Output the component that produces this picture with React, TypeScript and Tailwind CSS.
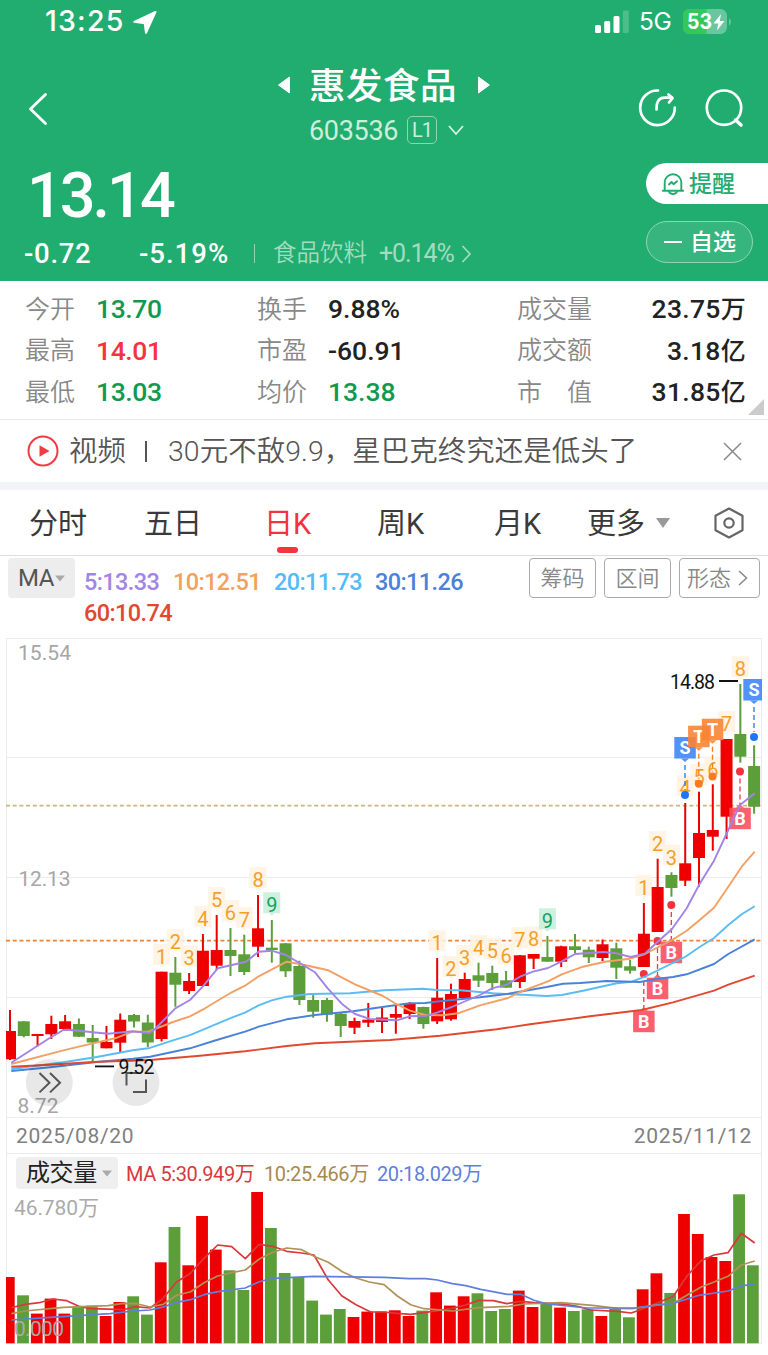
import React from 'react';

type Tone = 'r' | 'g';
// tone, high, body top, body bottom, low
type Candle = [Tone, number, number, number, number];

const RED = '#ee0000';
const GREEN = '#5c9f3a';

const candles: Candle[] = [
  ['r', 1010, 1031, 1059.3, 1060], ['g', 1021, 1021.3, 1036, 1037.3], ['r', 1034, 1034, 1036, 1046.5],
  ['r', 1015.7, 1024, 1034.3, 1039], ['r', 1015, 1021.3, 1029, 1030], ['g', 1018.5, 1024, 1036.7, 1037],
  ['g', 1025, 1038, 1042.5, 1061.5], ['r', 1026, 1042, 1048.3, 1048.3], ['r', 1013.5, 1019.7, 1042.7, 1052],
  ['g', 1014, 1015, 1021.5, 1027.5], ['g', 1014.7, 1022.5, 1042.5, 1047], ['r', 971.7, 971.7, 1039, 1041.5],
  ['g', 957, 972.7, 984.7, 1006.7], ['r', 973, 981, 991, 994], ['r', 934, 950.7, 986, 986.5],
  ['r', 915, 950, 965.7, 970], ['g', 928, 950, 956, 976], ['g', 934.7, 954.3, 972, 975],
  ['r', 895, 928.3, 946.7, 957], ['g', 920, 947.7, 950, 962.7], ['g', 943, 943.3, 971.3, 977],
  ['g', 960.7, 966, 1000, 1005], ['g', 994, 1000, 1011.7, 1017.7], ['g', 998, 1000, 1014.7, 1021.7],
  ['g', 1012.7, 1013.7, 1026, 1037], ['r', 1017.7, 1021, 1027.7, 1034], ['r', 1003, 1019.7, 1022.7, 1027],
  ['r', 1007, 1017.5, 1022, 1033], ['r', 1005, 1014, 1017.7, 1033.7], ['r', 1002, 1003.7, 1014, 1019],
  ['g', 1006.7, 1007, 1024, 1028.7], ['r', 958, 997.7, 1021.3, 1024], ['r', 983.7, 994, 1019.3, 1020.7],
  ['r', 972.7, 979, 998, 998], ['g', 962.7, 975.3, 980.7, 987], ['g', 965.7, 973, 983, 990],
  ['g', 971, 980.3, 987.7, 987.7], ['r', 955, 955.3, 982, 988], ['r', 954, 954, 958.7, 969],
  ['g', 936, 957, 961.7, 961.7], ['r', 945.7, 946.3, 961.7, 967], ['g', 934, 946.3, 950, 953],
  ['g', 946.7, 949.7, 957.3, 963], ['r', 939.5, 944.3, 958, 961], ['g', 942.7, 948.3, 967.7, 979],
  ['g', 960, 966.3, 970.7, 973.7], ['r', 903, 933.7, 967, 967], ['r', 858.7, 887, 932, 932],
  ['g', 872.3, 875, 888, 896.7], ['r', 803, 863.3, 880.7, 886], ['r', 791.7, 833, 858, 886.7],
  ['r', 784.3, 830, 836.7, 850.7], ['r', 739, 739, 816.7, 839], ['g', 684, 734, 756.7, 762.7],
  ['g', 745.3, 766, 806.7, 813.7],
];

const volumes: [Tone, number][] = [
  ['r', 66.3], ['g', 48], ['r', 29.7], ['r', 44.7], ['r', 29.7], ['g', 36], ['g', 37.7], ['r', 27.3],
  ['r', 41.3], ['g', 47], ['g', 28.7], ['r', 81], ['g', 116.3], ['r', 78], ['r', 127.3], ['r', 93.7],
  ['g', 73], ['g', 53.3], ['r', 151.7], ['g', 115.3], ['g', 70.3], ['g', 66.3], ['g', 42.7], ['g', 28.7],
  ['g', 34.3], ['r', 26.3], ['r', 31.7], ['r', 31.7], ['r', 33], ['r', 27.3], ['g', 32.7], ['r', 51],
  ['r', 37.7], ['r', 47], ['g', 50], ['g', 32.3], ['g', 34.3], ['r', 52.7], ['r', 36.3], ['g', 39.3],
  ['r', 35.7], ['g', 32.3], ['g', 34], ['r', 27.3], ['g', 34.3], ['g', 26], ['r', 54], ['r', 70],
  ['g', 50.3], ['r', 129.3], ['r', 109.3], ['r', 86.3], ['r', 82.3], ['g', 149], ['g', 78],
];

const priceLines = [
  { color: '#5bbcf3', points: '11.3,1069 50,1064 66.7,1061.7 96.7,1057 132.7,1050.3 148.3,1048.3 173,1040.3 190,1035.2 231.7,1017.7 245,1012.7 258.7,1005.3 271.7,1000.3 286.7,996.7 310,994 350,993.3 384,990.3 423,988.7 436.7,990 460,990.3 493,993.3 513,994.3 546.7,996 561.7,995 583,990.7 616.7,983.3 631.7,981.7 645,976.7 685,957 700,946.7 714,938 728.3,925 741.7,914.3 754.7,906.3' },
  { color: '#4a82d8', points: '11.3,1071 50,1067.3 96.7,1062 133,1058.7 150,1056.7 190,1048.3 216.7,1040 245,1031.7 258.7,1026.7 286.7,1019.3 315,1015 353,1011.3 384,1006.7 410,1003.3 425,1003 440,1001.3 480,997.3 506.7,994 546.7,987 563,983.7 580,983 606.7,981 640,982 657.7,978.7 673,977 686.7,974.3 714,964 728.3,954 754.7,939.3' },
  { color: '#e0492f', points: '11.3,1066.7 50,1064.7 93,1062 150,1060 200,1055.7 245,1051.3 286.7,1046 315,1043.3 390,1040 440,1035.7 496.7,1029.3 530,1024.3 590,1016.3 641.7,1010 673,1002.3 714,990.7 728.3,984.7 754.7,975.7' },
  { color: '#f2a064', points: '11.3,1064 63.3,1050.3 80,1046.3 115,1038.3 132.7,1031.7 148.3,1031.7 173,1022 190,1016.3 205,1008.3 231.7,992.3 245,985.7 258.7,976.3 286.7,961.7 300,964 328.3,970.3 355,984.3 383,996 395,1003.3 410,1010.7 425,1015 443,1015.3 458,1013.3 480,1005.3 508,998 520,992 548,981.3 561.7,974.3 583,966.7 605,961.7 630,958.7 645,954 672,940 686.7,930.7 700,919.7 714,907.7 728.3,886.7 741.7,866.7 754.7,851.7' },
  { color: '#a283e6', points: '11.3,1062.7 49.3,1038.3 63.3,1030 68.3,1029.7 108,1033.7 132.7,1031.3 149.3,1033 155,1029 175.3,1008.3 190,1000 202.7,986.7 217.7,968.3 246,961.7 258.7,951.7 271.7,950.7 286,955 315,972.3 327.7,988.3 341.7,1003.7 355,1014 370,1019 396.7,1020.3 410,1016.3 426.7,1015.7 437,1012.7 451.7,1007 480,995 492,988.3 506.7,984.7 520,976.7 533,971.7 548,968 561.7,961.3 575,954 603,952 616.7,953.3 630.7,957 644.7,953.7 657.7,941.7 672,929 686.7,908.3 700,883.3 714,860.7 728.3,830 740,805 754.7,793.3' },
];

const volumeLines = [
  { color: '#d9383c', points: '11.3,1307.7 25,1304.3 39.3,1302.7 52.7,1299 66.7,1300.7 80,1306.7 91.7,1308.7 123.3,1309.7 135,1306.7 150,1308 162.3,1299.3 176.7,1281.7 190,1273.7 204,1258.3 217.7,1245 231.7,1246.7 245.3,1258.7 259.3,1244.3 272.7,1246.3 286.7,1251.3 301.7,1253 314,1255 328.3,1280 341.7,1295.7 356,1304.7 370.7,1312 384,1312 397.3,1313.3 410.7,1314.3 425.7,1312.3 452.3,1308.3 465.7,1305 479,1300.3 493.3,1300.7 506.7,1303.7 520.7,1301.3 534,1302.7 565.7,1304.3 577.3,1306.3 590.7,1310 617.3,1311.3 631.3,1313 645.7,1307.7 659,1302.3 673.3,1296.3 687.3,1275.7 700.7,1261 714,1255 728,1252.7 741.3,1233.3 754.7,1243' },
  { color: '#b09257', points: '11.3,1313.7 25,1311 63.3,1307.3 108,1305.7 123.3,1303.3 136.7,1303.7 150,1307 163.3,1304.3 176.7,1295.3 190.7,1291.7 204,1282.7 217.7,1276 231.7,1272.7 245.3,1270 259.3,1259 272.7,1252.3 286.7,1248 301.7,1249.7 315,1256.7 328.3,1262.3 342.3,1271.7 356,1278 369.3,1282 384,1284.7 397.3,1296 410.7,1304.7 424,1308.7 452.3,1311 479,1307.7 509,1306.3 524,1304 560.7,1302.7 592.3,1305.3 617.3,1308.3 632.3,1308.7 659,1304.7 673.3,1303.3 687.3,1295 700.7,1287.3 714,1282 728,1276.3 741.3,1265 754.7,1261' },
  { color: '#5f7fdc', points: '11.3,1320 50,1317.3 110,1313.7 133.3,1311 150,1310 163.3,1307 176.7,1302.3 190.7,1299.7 204,1294.7 217.7,1291.7 245.3,1288 259.3,1281.7 272.7,1278.3 313.3,1276.3 384,1277.3 409,1278.7 425.7,1278.7 437.3,1280 452.3,1283.7 465.7,1285.7 480.7,1289.3 507.3,1294.3 520.7,1294.3 534,1300.3 547.3,1304 587.3,1308 634,1308 659,1305 672.3,1303.7 699,1295.3 728,1291 742.3,1285.7 754.7,1284.3' },
];

// candle index where each run of counting numbers starts, and how long it is
const countRuns = [
  { start: 11, length: 9 },
  { start: 31, length: 9 },
  { start: 46, length: 8 },
];

const markers = [
  { label: 'S', x: 685, y: 737, dot: 795, color: '#3f86fb', dotColor: '#1f76fb' },
  { label: 'T', x: 698.8, y: 725.7, dot: 783.7, color: '#fb8433', dotColor: '#fb7a20' },
  { label: 'T', x: 712.5, y: 718.7, dot: 776.5, color: '#fb8433', dotColor: '#fb7a20' },
  { label: 'S', x: 754, y: 679, dot: 737, color: '#3f86fb', dotColor: '#1f76fb' },
  { label: 'B', x: 643.8, y: 1010.7, dot: 974, color: '#fb4f5f', dotColor: '#f5333f' },
  { label: 'B', x: 657.5, y: 977.7, dot: 941, color: '#fb4f5f', dotColor: '#f5333f' },
  { label: 'B', x: 671.3, y: 941.7, dot: 905, color: '#fb4f5f', dotColor: '#f5333f' },
  { label: 'B', x: 740, y: 807.7, dot: 771.5, color: '#fb4f5f', dotColor: '#f5333f' },
];

const candleX = (i: number) => 10 + i * 13.78;

function StatusBar() {
  return (
    <div className="flex h-[43px] items-center pl-[45px] font-['Inter',sans-serif]">
      <span className="w-[87px] text-[28.5px] font-medium leading-none tracking-[1.2px]">13:25</span>
      <svg width="26" height="26" viewBox="0 0 26 26">
        <path d="M23.500 3 2.300 12.800 12.700 14.300 14 23.800Z" fill="#fff" stroke="#fff" strokeWidth="2" strokeLinejoin="round" />
      </svg>
      <div className="flex-1" />
      <svg width="34" height="24" viewBox="0 0 34 24">
        <rect x="0" y="15" width="6" height="8" rx="1.5" fill="#fff" />
        <rect x="9.2" y="11" width="6" height="12" rx="1.5" fill="#fff" />
        <rect x="18.5" y="6" width="6" height="17" rx="1.5" fill="#fff" />
        <rect x="27.8" y="0.5" width="6" height="22.5" rx="1.5" fill="#fff" fillOpacity="0.2" />
      </svg>
      <span className="ml-[10px] w-[40px] text-[24.5px] leading-none tracking-[-0.3px]">5G</span>
      <svg className="mr-[36px] ml-[4px]" width="49" height="26" viewBox="0 0 49 26">
        <rect width="44" height="25" rx="6.5" fill="#fff" fillOpacity="0.32" />
        <path d="M6.500 0H23.500V25H6.500A6.500 6.500 0 0 1 0 18.500V6.500A6.500 6.500 0 0 1 6.500 0Z" fill="#34c759" />
        <path d="M46 9.500c2.500.8 2.500 6 0 7Z" fill="#fff" fillOpacity="0.32" />
        <text x="4" y="20.3" fontSize="21" fontWeight="700" textLength="25" lengthAdjust="spacingAndGlyphs" fill="#fff">53</text>
        <path d="M38 5 30.500 14.500h4.700L34 21.500 41.500 12h-4.700L38 5Z" fill="#fff" />
      </svg>
    </div>
  );
}

function TitleBar() {
  return (
    <div className="flex h-[117px] pt-[21px]">
      <svg className="mt-[28px] ml-[27px]" width="22" height="34" viewBox="0 0 22 34" fill="none" stroke="#fff" strokeWidth="2.8" strokeLinecap="round" strokeLinejoin="round">
        <path d="M18.500 2.500 3.500 17l15 14.500" />
      </svg>
      <div className="ml-[228px] w-[214px]">
        <div className="flex h-[42px] items-center">
          <svg width="14" height="18" viewBox="0 0 14 18">
            <path d="M12.500 1v16L1.500 9Z" fill="#fff" stroke="#fff" strokeLinejoin="round" />
          </svg>
          <h1 className="mx-[18px] w-[151px] pt-[4px] text-[36.5px] font-medium leading-none tracking-[0.5px]">惠发食品</h1>
          <svg width="14" height="18" viewBox="0 0 14 18">
            <path d="M1.500 1v16l11-8Z" fill="#fff" stroke="#fff" strokeLinejoin="round" />
          </svg>
        </div>
        <div className="mt-[10px] flex h-[28px] items-center pl-[32px] text-[#cdeedd]">
          <span className="w-[98px] pt-[3px] text-[27px] leading-none tracking-[-0.3px]">603536</span>
          <span className="flex h-[28px] w-[30px] items-center justify-center rounded-[5px] border border-[#8fd5b3] text-[20px] tracking-[-1px]">L1</span>
          <svg className="ml-[11px]" width="16" height="11" viewBox="0 0 16 11" fill="none" stroke="#d8f2e5" strokeWidth="1.8">
            <path d="M1 1l7 8 7-8" />
          </svg>
        </div>
      </div>
      <svg className="mt-[23px] ml-[147px]" width="40" height="42" viewBox="0 0 40 42" fill="none" stroke="#fff" strokeWidth="2.7" strokeLinecap="round" strokeLinejoin="round">
        <path d="M20 3.500A17.300 17.300 0 1 0 36.800 20.500" />
        <path d="M18.500 22.500c-.4-7 2-11.800 8-11.800H34" />
        <path d="M30.500 7.500 34.500 11.200 31 15.500" />
      </svg>
      <svg className="mt-[23px] ml-[26px]" width="42" height="42" viewBox="0 0 42 42" fill="none" stroke="#fff" strokeWidth="2.7" strokeLinecap="round">
        <circle cx="20" cy="20.7" r="17.2" />
        <path d="M31.500 33l5.500 5" strokeWidth="3.5" />
      </svg>
    </div>
  );
}

function PriceHeader() {
  return (
    <div className="flex h-[121px] justify-between">
      <div>
        <div className="h-[70px] pl-[27px] text-[63px] font-medium leading-[72px] tracking-[-3px]">13.14</div>
        <div className="flex h-[46px] items-center pt-[1px] pl-[24px] text-[27.5px] font-medium">
          <span className="w-[115px] tracking-[0.7px]">-0.72</span>
          <span className="w-[115px] tracking-[1px]">-5.19%</span>
          <span className="h-[19px] w-px bg-[#8fd5b3]" />
          <span className="ml-[18px] w-[106px] pt-[1px] text-[23.5px] font-[350] text-[#a3dcc0]">食品饮料</span>
          <span className="w-[82px] text-[25px] font-normal tracking-[-1.1px] text-[#a3dcc0]">+0.14%</span>
          <svg width="11" height="18" viewBox="0 0 11 18" fill="none" stroke="#a3dcc0" strokeWidth="1.7">
            <path d="M1.500 1l7.500 8-7.500 8" />
          </svg>
        </div>
      </div>
      <div className="w-[122px] pt-[3px] text-[23px]">
        <div className="flex h-[41px] items-center rounded-l-full bg-white pl-[15px] font-medium text-[#21ad70]">
          <svg width="24" height="24" viewBox="0 0 24 24" fill="none" stroke="#21ad70" strokeWidth="1.9" strokeLinecap="round" strokeLinejoin="round">
            <path d="M3.700 18.500V10.500a8.300 8.300 0 0 1 16.600 0v8M1.800 18.800h20.400" />
            <path d="M8 19.500c1 3.300 7 3.300 8 0" />
            <path d="M8 12.500l2.500-2.500 2 2.200 3.500-3" />
          </svg>
          <span className="ml-[4px] pt-[3px]">提醒</span>
        </div>
        <div className="mt-[17px] flex h-[42px] w-[107px] items-center rounded-full border border-[#8fd5b3] bg-white/10 pl-[17px]">
          <span className="h-[2.5px] w-[18px] bg-white" />
          <span className="ml-[8px] pt-[3px] font-medium">自选</span>
        </div>
      </div>
    </div>
  );
}

const quotes = [
  [['今开', '13.70', 'text-[#12994f]'], ['换手', '9.88%', 'text-[#222]'], ['成交量', '23.75', 'text-[#222]', '万']],
  [['最高', '14.01', 'text-[#f5333f]'], ['市盈', '-60.91', 'text-[#222]'], ['成交额', '3.18', 'text-[#222]', '亿']],
  [['最低', '13.03', 'text-[#12994f]'], ['均价', '13.38', 'text-[#12994f]'], ['市　值', '31.85', 'text-[#222]', '亿']],
];

function QuoteGrid() {
  return (
    <div className="relative h-[139px] border-b border-[#e9e9e9] pt-[8px]">
      {quotes.map((row, r) => (
        <div key={r} className="flex h-[41.3px] items-center pl-[25px] text-[26.5px] font-medium leading-none">
          {row.map(([label, value, tone, unit], c) => (
            <div key={label} className={c === 0 ? 'flex w-[232px] items-center tracking-[-0.4px]' : c === 1 ? 'flex w-[260px] items-center' : 'flex w-[229px] items-center justify-between tracking-[0.3px]'}>
              <span className="w-[71px] whitespace-nowrap text-[25px] font-[350] tracking-normal text-[#888]">{label}</span>
              <span className={tone}>
                {value}
                {unit && <span className="text-[25px]">{unit}</span>}
              </span>
            </div>
          ))}
        </div>
      ))}
      <svg className="absolute right-[4px] bottom-[4px]" width="16" height="16" viewBox="0 0 16 16">
        <path d="M16 0v16H0Z" fill="#cbcbcb" />
      </svg>
    </div>
  );
}

function NewsBar() {
  return (
    <div className="flex h-[70px] items-center border-b-8 border-[#f2f4f8] pl-[27px] text-[28.4px] font-[350] text-[#555]">
      <svg width="32" height="32" viewBox="0 0 32 32">
        <circle cx="16" cy="16" r="14.5" fill="none" stroke="#f03a45" strokeWidth="2" />
        <path d="M12.500 10.300v11.400l10-5.700Z" fill="#f03a45" />
      </svg>
      <span className="ml-[10px] w-[76px] pt-[3px]">视频</span>
      <span className="h-[21px] w-[2px] bg-[#555]" />
      <span className="ml-[21px] flex-1 whitespace-nowrap pt-[3px] tracking-[0.1px]">30元不敌9.9，星巴克终究还是低头了</span>
      <svg className="mr-[26px]" width="19" height="19" viewBox="0 0 19 19" stroke="#888" strokeWidth="1.5">
        <path d="M1 1l17 17M18 1L1 18" />
      </svg>
    </div>
  );
}

const tabs = [
  { label: '分时', width: 'w-[115px]' },
  { label: '五日', width: 'w-[120px]' },
  { label: '日K', width: 'w-[113px]' },
  { label: '周K', width: 'w-[117px]' },
  { label: '月K', width: 'w-[93px]' },
  { label: '更多', width: 'w-[68px]' },
];

function PeriodTabs() {
  return (
    <div className="flex h-[66px] items-center border-b border-[#dedede] pl-[29px] text-[29px] text-[#3a3a3a]">
      {tabs.map(({ label, width }) => (
        <div key={label} className={`${width} pt-[4px]`}>
          {label === '日K' ? (
            <span className="relative text-[#f5333f]">
              日K
              <span className="absolute -bottom-[12px] left-[13px] h-[6px] w-[21px] rounded-[3px] bg-[#f5333f]" />
            </span>
          ) : (
            label
          )}
        </div>
      ))}
      <svg width="16" height="12" viewBox="0 0 16 12">
        <path d="M1 1h14L8 11Z" fill="#999" />
      </svg>
      <svg className="ml-[41px]" width="34" height="34" viewBox="0 0 34 34" fill="none" stroke="#666" strokeWidth="2.2" strokeLinejoin="round">
        <path d="M17 2.500 30.500 9.700V24.300L17 31.500 3.500 24.300V9.700Z" />
        <circle cx="17" cy="17" r="4.7" />
      </svg>
    </div>
  );
}

function AverageBar() {
  return (
    <div className="flex h-[82px] pt-[2px] pl-[8px]">
      <div className="flex h-[40px] w-[67px] items-center rounded-[4px] bg-[#ededed] pl-[10px] text-[24px] tracking-[-0.5px] text-[#555]">
        MA
        <svg className="ml-[1px]" width="10" height="7" viewBox="0 0 10 7">
          <path d="M0 .5h10L5 6.500Z" fill="#aaa" />
        </svg>
      </div>
      <div className="mt-[9px] ml-[9px] w-[445px] text-[23.5px] font-medium leading-[30.5px] tracking-[-0.6px]">
        <div className="flex">
          <span className="w-[89px] text-[#a283e6]">5:13.33</span>
          <span className="w-[101px] text-[#f5a05c]">10:12.51</span>
          <span className="w-[101px] text-[#55bbf5]">20:11.73</span>
          <span className="text-[#4a82d8]">30:11.26</span>
        </div>
        <div className="text-[#e0492f]">60:10.74</div>
      </div>
      <div className="flex h-[40px] gap-[8px] text-[22px] font-[350] text-[#888]">
        <span className="flex w-[67px] items-center justify-center rounded-[4px] border border-[#aaa]">筹码</span>
        <span className="flex w-[67px] items-center justify-center rounded-[4px] border border-[#aaa]">区间</span>
        <span className="flex w-[81px] items-center rounded-[4px] border border-[#aaa] pl-[7px]">
          形态
          <svg className="ml-[7px]" width="10" height="16" viewBox="0 0 10 16" fill="none" stroke="#888" strokeWidth="1.5">
            <path d="M1 1l7.500 7L1 15" />
          </svg>
        </span>
      </div>
    </div>
  );
}

function CountTag({ x, bottom, value }: { x: number; bottom: number; value: number }) {
  const last = value === 9;
  return (
    <g>
      <path d={`M${x - 8.5} ${bottom - 21}h17v21h-6l-2.500 2.500-2.500-2.500h-6Z`} fill={last ? '#c9f0dc' : '#fff3e3'} fillOpacity="0.9" />
      <text x={x} y={bottom - 1} textAnchor="middle" fontSize="20" fill={last ? '#16a35f' : '#f2a128'}>{value}</text>
    </g>
  );
}

function TradeMarker({ label, x, y, dot, color, dotColor }: (typeof markers)[number]) {
  const below = label === 'B';
  const tip = below ? `M${x - 4} ${y}l4-3.500 4 3.500Z` : `M${x - 4} ${y + 21.5}l4 3.500 4-3.500Z`;
  return (
    <g>
      <line x1={x} x2={x} y1={below ? dot + 7 : y + 28} y2={below ? y - 2 : dot - 5} stroke={dotColor} strokeWidth="1.3" strokeDasharray="5 3" />
      <circle cx={x} cy={dot} r="4" fill={dotColor} />
      <rect x={x - 10.7} y={y} width="21.5" height="21.5" fill={color} fillOpacity="0.9" />
      <path d={tip} fill={color} fillOpacity="0.9" />
      <text x={x} y={y + 17} textAnchor="middle" fontSize="18" fontWeight="700" fill="#fff">{label}</text>
    </g>
  );
}

function PriceChart() {
  return (
    <svg className="block" width="768" height="480" viewBox="0 638 768 480">
      <defs>
        <clipPath id="plot">
          <rect x="6" y="638" width="756" height="480" />
        </clipPath>
      </defs>
      <g stroke="#ebebeb">
        {[638.5, 757.5, 877.5, 997.5, 1117.5].map((y) => (
          <line key={y} x1="6" x2="762" y1={y} y2={y} />
        ))}
        <path d="M6.500 638V1118M761.500 638V1118" />
      </g>
      <g fill="#a6a6a6" fontSize="21">
        <text x="18" y="660" textLength="53">15.54</text>
        <text x="18.5" y="886" textLength="52">12.13</text>
        <text x="17.5" y="1112.5" textLength="41">8.72</text>
      </g>
      <line x1="6" x2="762" y1="805.7" y2="805.7" stroke="#cbb67c" strokeWidth="1.7" strokeDasharray="4 2.7" />
      <line x1="6" x2="762" y1="940.7" y2="940.7" stroke="#f08238" strokeWidth="1.8" strokeDasharray="4 2.7" />
      <g clipPath="url(#plot)">
        {countRuns.map(({ start, length }) =>
          Array.from({ length }, (_, n) => (
            <CountTag key={start + n} x={candleX(start + n)} bottom={candles[start + n][1] - 6.7} value={n + 1} />
          ))
        )}
        {candles.map(([tone, high, top, bottom, low], i) => (
          <g key={i} fill={tone === 'r' ? RED : GREEN}>
            <rect x={candleX(i) - 1} y={high} width="2" height={low - high} />
            <rect x={candleX(i) - 6} y={top} width="12" height={bottom - top} />
          </g>
        ))}
        {markers.map((m) => (
          <TradeMarker key={m.x} {...m} />
        ))}
        {priceLines.map(({ color, points }) => (
          <polyline key={color} points={points} fill="none" stroke={color} strokeWidth="1.9" strokeLinejoin="round" />
        ))}
      </g>
      <g fill="#000" fillOpacity="0.09">
        <circle cx="49.3" cy="1082.5" r="23.5" />
        <circle cx="136" cy="1082.5" r="23.5" />
      </g>
      <g fill="none" stroke="#555" strokeWidth="2">
        <path d="M39.500 1073l10 9.700-10 9.700M50 1073l10 9.700-10 9.700" />
        <path d="M126.500 1085.500V1073H139M146 1079.500V1092H133" />
      </g>
      <g fill="#111" fontSize="19.5">
        <text x="670" y="688.7" textLength="45">14.88</text>
        <text x="118.5" y="1073.5" textLength="36">9.52</text>
        <rect x="719" y="680" width="19" height="2" />
        <rect x="95" y="1065.5" width="19" height="1.8" />
      </g>
    </svg>
  );
}

function VolumePanel() {
  return (
    <div>
      <div className="mx-[6px] flex h-[36px] items-center justify-between border-x border-b border-[#ebebeb] px-[9px] pt-[3px] text-[21px] tracking-[0.65px] text-[#808080]">
        <span>2025/08/20</span>
        <span>2025/11/12</span>
      </div>
      <div className="mx-[6px] flex h-[38px] items-center border-x border-[#ebebeb] pl-[9px] text-[20px] tracking-[-0.4px]">
        <div className="flex h-[32px] w-[102px] items-center rounded-[4px] bg-[#efefef] pl-[10px] text-[24px] text-[#222]">
          成交量
          <svg className="ml-[5px]" width="10" height="7" viewBox="0 0 10 7">
            <path d="M0 .5h10L5 6.500Z" fill="#aaa" />
          </svg>
        </div>
        <span className="ml-[8px] w-[138px] whitespace-nowrap pt-[2px] text-[#d9383c]">MA 5:30.949万</span>
        <span className="w-[113px] whitespace-nowrap pt-[2px] text-[#a98a4e]">10:25.466万</span>
        <span className="whitespace-nowrap pt-[2px] text-[#5f7fdc]">20:18.029万</span>
      </div>
      <svg className="block" width="768" height="163" viewBox="0 1192 768 163">
        <path d="M6.500 1192V1343.500H761.500V1192" fill="none" stroke="#ebebeb" />
        {volumes.map(([tone, height], i) => (
          <rect
            key={i}
            x={i === 0 ? 6 : 3.35 + i * 13.77}
            y={1343.3 - height}
            width={i === 0 ? 8.7 : 11.8}
            height={height}
            fill={tone === 'r' ? RED : GREEN}
          />
        ))}
        {volumeLines.map(({ color, points }) => (
          <polyline key={color} points={points} fill="none" stroke={color} strokeWidth="1.7" strokeLinejoin="round" />
        ))}
        <g fill="#aaa" fontSize="21">
          <text x="14" y="1215" textLength="85">46.780万</text>
          <text x="14" y="1336" textLength="50">0.000</text>
        </g>
      </svg>
    </div>
  );
}

function App() {
  return (
    <div className="h-[1355px] w-[768px] overflow-hidden bg-white font-['Roboto','Noto_Sans_CJK_SC',sans-serif]">
      <header className="h-[281px] bg-[#21ad70] text-white">
        <StatusBar />
        <TitleBar />
        <PriceHeader />
      </header>
      <QuoteGrid />
      <NewsBar />
      <PeriodTabs />
      <AverageBar />
      <PriceChart />
      <VolumePanel />
    </div>
  );
}

export default App;
